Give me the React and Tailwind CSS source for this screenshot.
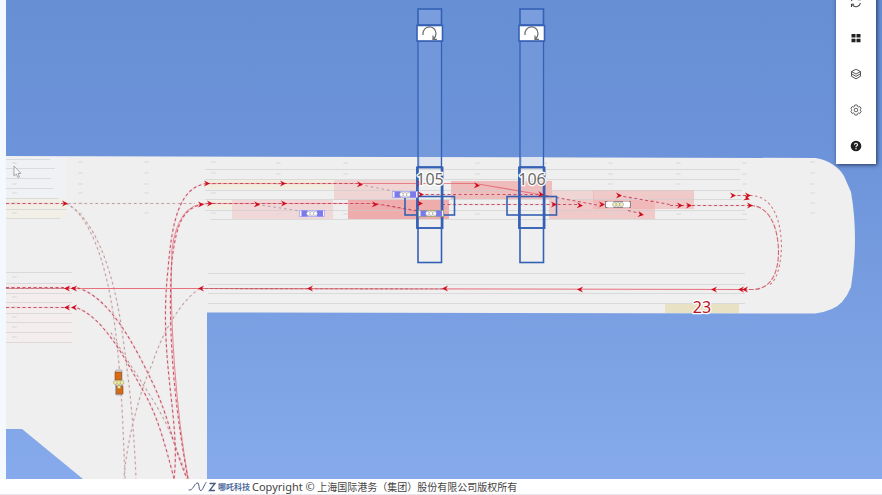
const LAND =
  'M6 156 L400 157 L815 158 Q824 159 832 164 Q840 169 844 176 L851 192 Q855 215 855 240 Q855 262 851 287 Q848 295 842 302 Q834 311 815 313.5 L207 312.5 L207 479 L83 479 L22 429 L6 429 Z';

// [x1, x2, y]
const LANES = [
  [6, 50, 159], [6, 55, 168], [6, 51, 178], [6, 53, 188], [6, 58, 198], [6, 66, 209], [6, 60, 218],
  [6, 72, 272], [6, 72, 283], [6, 72, 293], [6, 72, 302], [6, 72, 313], [6, 72, 322], [6, 72, 332], [6, 72, 342],
  [205, 740, 169], [205, 740, 179], [205, 742, 190], [205, 742, 199], [205, 745, 210], [210, 747, 219],
  [208, 745, 273], [208, 745, 284], [208, 745, 293], [208, 745, 303],
];

// [x, y, width, height, color, opacity]
const ZONES = [
  [6, 157, 60, 41, '#f2f3fc', 0.5],
  [6, 199, 60, 19, '#f4efcf', 0.3],
  [6, 284, 66, 60, '#ffe9e9', 0.3],
  [207, 180, 127, 9, '#f6eecb', 0.45],
  [207, 200, 27, 9, '#f6eecb', 0.3],
  [334, 180, 83, 20, '#f2bcbc', 0.5],
  [232, 200, 101, 19, '#f2bcbc', 0.45],
  [348, 200, 101, 19, '#ec7f7f', 0.6],
  [451, 181, 101, 18, '#ee9a9a', 0.6],
  [549, 200, 106, 19, '#f0a9a9', 0.55],
  [549, 190, 45, 10, '#f2bcbc', 0.5],
  [593, 190, 101, 19, '#f0a9a9', 0.55],
  [665, 304, 74, 9, '#e6dcb4', 0.75],
];

const SMUDGES = [
  ...[162, 173, 184, 193, 203, 213].flatMap((y) => [[78, y], [144, y], [211, y], [810, y]]),
  ...[163, 174, 184, 214].flatMap((y) => [[276, y], [343, y], [475, y], [542, y], [608, y], [676, y], [742, y]]),
  ...[163, 173, 184, 193, 203, 213, 277, 297, 307, 317, 327, 337].map((y) => [12, y]),
];

const FAINT = [
  'M68 204 H195',
  'M66 204 C88 214 106 260 114 320 S123 430 125 479',
  'M66 204 C92 216 112 265 121 325 S134 430 136 479',
  'M200 289 C182 300 163 331 152 365 C140 390 126 445 124 479',
  'M111 333 C132 372 160 405 172 438 L188 479',
  'M257 205 L310 213',
  'M360 185 L400 193',
];

const DASHED = [
  'M6 204 H65',
  'M6 288 H76 C109 296 134 345 152 382 S172 445 187 479',
  'M6 308 H76 C105 318 128 365 143 391 S165 445 174 479',
  'M174 479 C181 420 158 360 168 270 C172 220 180 187 207 184',
  'M188 479 C171 390 168 310 172 260 C177 222 183 207 207 204',
  'M207 184 H360',
  'M207 204 H376',
  'M376 204 L422 212',
  'M420 195 H540',
  'M442 205 H580',
  'M540 195 L600 206 H608',
  'M618 196 L670 205',
  'M628 211 L641 214',
  'M670 206 H750',
  'M732 196 H750',
];

const SOLID = [
  'M188 479 C176 410 169 320 172 250 C176 219 187 204 207 204',
  'M207 184 H475 L540 195',
  'M207 204 H374 L418 212',
];

// [x, y, rotation]
const ARROWS = [
  [65, 204, 0], [207, 184, 0], [283, 184, 0], [360, 185, 5], [420, 184, 0], [477, 186, 5], [541, 195, 8],
  [201, 205, 0], [210, 204, 0], [257, 205, 5], [284, 204, 0], [375, 205, 5], [421, 195, 0], [420, 204, 0],
  [554, 205, 0], [580, 206, 5], [602, 205, 0], [619, 196, 0], [641, 215, 10], [680, 206, 0], [689, 206, 0],
  [733, 196, 0], [748, 196, 0], [747, 199, 20], [750, 206, 0],
  [741, 290, 180], [745, 290, 180], [714, 290, 180], [580, 290, 180], [445, 289, 180], [310, 289, 180],
  [201, 289, 180], [74, 289, 180], [67, 289, 180], [74, 308, 180], [67, 308, 180],
];

const CRANES = [
  { id: '105', x: 418 },
  { id: '106', x: 520 },
];

function Crane({ x }) {
  return (
    <g fill="none" stroke="#3561b5" strokeWidth="1.6">
      <rect x={x} y="9" width="23.5" height="16" fill="#799ddd" />
      <rect x={x} y="41" width="23.5" height="126" fill="#789cdd" fillOpacity="0.65" strokeWidth="1.3" />
      <path d={`M${x + 1.5} 157 h21 v10 h-21 z`} fill="#dfe5f0" stroke="none" />
      <rect x={x - 1} y="25.5" width="25.5" height="15.5" fill="#fff" />
      <path
        d={`M${x + 5} 35 C${x + 4} 24.5 ${x + 18} 24.5 ${x + 18} 33.5 Q${x + 18} 37 ${x + 15.5} 39 M${x + 15} 35.5 V39.3 H${x + 19}`}
        stroke="#666b70"
        strokeWidth="1.2"
      />
      <rect x={x} y="167" width="23.5" height="95.5" />
      <rect x={x - 1} y="167.5" width="25.5" height="60.5" strokeWidth="1.9" />
      <rect x={x - 13} y="196.5" width="49.5" height="18.5" />
    </g>
  );
}

function Truck({ x, y, color = '#7b79ee', label = '#fff', tips = '#a7aaf3' }) {
  return (
    <g>
      <rect x={x - 12.5} y={y - 3} width="25" height="6" fill="#f4f4ff" stroke={tips} strokeWidth="0.8" />
      <rect x={x - 10.5} y={y - 3} width="6" height="6" fill={color} />
      <rect x={x + 5} y={y - 3} width="6" height="6" fill={color} />
      <g fill={label} stroke="#888" strokeWidth="0.5">
        <circle cx={x - 3.5} cy={y} r="2" />
        <circle cx={x} cy={y} r="2" />
        <circle cx={x + 3.5} cy={y} r="2" />
      </g>
    </g>
  );
}

function YardMap() {
  return (
    <svg
      viewBox="6 0 876 479"
      preserveAspectRatio="xMinYMin slice"
      className="block h-full w-full"
      role="img"
      aria-label="Terminal map"
    >
      <defs>
        <linearGradient id="water" x1="0" y1="0" x2="0" y2="1">
          <stop offset="0" stopColor="#668fd4" />
          <stop offset="0.33" stopColor="#6d94da" />
          <stop offset="0.66" stopColor="#7a9fe2" />
          <stop offset="1" stopColor="#86aaeb" />
        </linearGradient>
      </defs>
      <rect x="6" y="0" width="876" height="479" fill="url(#water)" />
      <path d={LAND} fill="#efefef" />
      {ZONES.map(([x, y, w, h, fill, opacity]) => (
        <rect key={`${x}-${y}`} x={x} y={y} width={w} height={h} fill={fill} fillOpacity={opacity} />
      ))}
      <g stroke="#c9cccd" strokeWidth="0.8" strokeOpacity="0.75">
        {LANES.map(([x1, x2, y]) => (
          <line key={`${x1}-${y}`} x1={x1} x2={x2} y1={y + 0.5} y2={y + 0.5} />
        ))}
      </g>
      <g fill="#d5d7d8" fillOpacity="0.5">
        {SMUDGES.map(([x, y]) => (
          <rect key={`${x}-${y}`} x={x} y={y - 1} width="5" height="2" rx="1" />
        ))}
      </g>

      <g fill="none" strokeWidth="1.1" transform="translate(0 -0.5)">
        {FAINT.map((d) => (
          <g key={d}>
            <path d={d} stroke="#f7d9dc" strokeWidth="2" strokeOpacity="0.35" />
            <path d={d} stroke="#b5a3a3" strokeDasharray="2.5 3" />
          </g>
        ))}
        {SOLID.map((d) => (
          <path key={d} d={d} stroke="#e0505f" strokeOpacity="0.65" />
        ))}
        <path d="M6 289 H200 L745 290" stroke="#e8707c" />
        <path d="M200 289 L445 289.5 M6 289 H76" stroke="#8a5560" strokeOpacity="0.5" strokeDasharray="3 2" />
        {DASHED.map((d) => (
          <g key={d}>
            <path d={d} stroke="#f6c9cf" strokeWidth="2" strokeOpacity="0.4" />
            <path d={d} stroke="#bd3f55" strokeOpacity="0.85" strokeDasharray="3 2.5" />
          </g>
        ))}
        <path d="M750 206 C768 206 778 225 778.5 252 C778.5 275 770 289 754 290 H742" stroke="#d46570" strokeDasharray="5 1.5" />
        <path d="M750 196 C771 196 781 217 781.5 247 C781 268 776 281 770 285" stroke="#d27b83" strokeDasharray="2.5 2.5" />
      </g>

      {CRANES.map((crane) => (
        <Crane key={crane.id} x={crane.x} />
      ))}
      <Truck x={312} y={213.5} />
      <Truck x={405} y={194.5} />
      <Truck x={431} y={213.5} tips="#91a65a" />
      <Truck x={618} y={204.5} color="#fff" label="#f1efb5" tips="#77706e" />
      <g>
        <rect x="115.5" y="370" width="6.5" height="25" rx="1" fill="#e7e3e3" stroke="#8b8584" strokeWidth="0.6" />
        <rect x="115" y="372" width="6.5" height="8" fill="#d96a10" stroke="#7d4b28" strokeWidth="0.6" />
        <rect x="116.5" y="386" width="6.5" height="8" fill="#d96a10" stroke="#7d4b28" strokeWidth="0.6" />
        <g fill="#f1edaf" stroke="#a39d62" strokeWidth="0.6">
          <circle cx="115.5" cy="382.5" r="2" />
          <circle cx="118.8" cy="382.5" r="2" />
          <circle cx="122" cy="382.5" r="2" />
          <circle cx="119" cy="387" r="1.6" />
        </g>
      </g>

      <g fill="#cf0d1c">
        {ARROWS.map(([x, y, r]) => (
          <path
            key={`${x}-${y}`}
            d="M3 0 L-3 -3 L-1 0 L-3 3 Z"
            transform={`translate(${x} ${y - 0.5}) rotate(${r})`}
          />
        ))}
      </g>

      <g
        fontFamily="'Noto Sans', 'Open Sans', sans-serif"
        fontSize="16"
        textAnchor="middle"
        stroke="#fff"
        strokeWidth="2.5"
        strokeLinejoin="round"
        paintOrder="stroke"
      >
        {CRANES.map(({ id, x }) => (
          <text key={id} x={x + 12} y="185" fill="#6b6b6b">
            {id}
          </text>
        ))}
        <text x="702" y="313" fill="#b8141f">
          23
        </text>
      </g>
      <path d="M14 166 v10 l2.3 -2 1.6 3.6 1.6 -.7 -1.6 -3.5 h3 z" fill="#f8f8f8" stroke="#92969b" strokeWidth="0.8" />
    </svg>
  );
}

function RefreshIcon() {
  return (
    <svg viewBox="0 0 12 12" className="h-3 w-3" fill="none" stroke="#444" strokeWidth="1.1">
      <path d="M1.5 5 A4.7 4.7 0 0 1 9.5 2.8 M10.5 1 V3.7 H7.8" />
      <path d="M10.5 7 A4.7 4.7 0 0 1 2.5 9.2 M1.5 11 V8.3 H4.2" />
    </svg>
  );
}

function GridIcon() {
  return (
    <svg viewBox="0 0 12 12" className="h-3 w-3" fill="#222">
      <path d="M1.5 2 H5.5 V5.5 H1.5 Z M6.5 2 H10.5 V5.5 H6.5 Z M1.5 6.7 H5.5 V10.2 H1.5 Z M6.5 6.7 H10.5 V10.2 H6.5 Z" />
    </svg>
  );
}

function LayersIcon() {
  return (
    <svg viewBox="0 0 12 12" className="h-3 w-3" fill="none" stroke="#444" strokeWidth="0.9" strokeLinejoin="round">
      <path d="M6 1.2 L10.5 3.6 L6 6 L1.5 3.6 Z" />
      <path d="M1.5 3.6 V8.3 L6 10.8 L10.5 8.3 V3.6 M1.5 5.9 L6 8.3 L10.5 5.9" />
    </svg>
  );
}

function GearIcon() {
  return (
    <svg viewBox="0 0 12 12" className="h-3 w-3" fill="none" stroke="#555" strokeWidth="0.9" strokeLinejoin="round">
      <path d="M4.8 1 H7.2 L7.6 2.5 L8.5 3 L10 2.6 L11.2 4.7 L10.1 5.7 V6.3 L11.2 7.3 L10 9.4 L8.5 9 L7.6 9.5 L7.2 11 H4.8 L4.4 9.5 L3.5 9 L2 9.4 L0.8 7.3 L1.9 6.3 V5.7 L0.8 4.7 L2 2.6 L3.5 3 L4.4 2.5 Z" />
      <circle cx="6" cy="6" r="1.8" />
    </svg>
  );
}

function HelpIcon() {
  return (
    <svg viewBox="0 0 12 12" className="h-3 w-3" fill="none">
      <circle cx="6" cy="6" r="5.3" fill="#222" />
      <path d="M4.5 4.7 A1.5 1.5 0 1 1 6.5 6.1 Q6 6.3 6 7.2" stroke="#fff" strokeWidth="1.1" />
      <circle cx="6" cy="8.8" r="0.7" fill="#fff" />
    </svg>
  );
}

const TOOLS = [
  { label: 'Refresh', icon: <RefreshIcon /> },
  { label: 'Panels', icon: <GridIcon /> },
  { label: 'Layers', icon: <LayersIcon /> },
  { label: 'Settings', icon: <GearIcon /> },
  { label: 'Help', icon: <HelpIcon /> },
];

export default function App() {
  return (
    <div className="flex h-screen flex-col overflow-hidden bg-white font-['Noto_Sans','Noto_Sans_CJK_SC',sans-serif]">
      <div className="relative flex min-h-0 flex-1">
        <div className="w-1.5 shrink-0 bg-[#f4f8ff]" />
        <main className="min-w-0 flex-1">
          <YardMap />
        </main>
        <nav
          aria-label="Map tools"
          className="absolute -top-4 right-[6px] flex flex-col bg-white shadow-[1px_1px_4px_rgba(20,30,60,0.8)]"
        >
          {TOOLS.map(({ label, icon }) => (
            <button key={label} type="button" aria-label={label} className="flex h-9 w-10 items-center justify-center">
              {icon}
            </button>
          ))}
        </nav>
      </div>
      <footer className="flex h-4 shrink-0 items-center border-b border-gray-200 bg-white pl-[188px] leading-4 text-[#444]">
        <svg viewBox="0 0 28 12" className="h-3 w-7 shrink-0" fill="none" stroke="#46597f" strokeLinecap="round" aria-hidden>
          <path d="M1 9 C5 10 6 3 9 2 C12 1 10 10 13 9.5 C15 9 16 4 18 1.5" strokeWidth="1" />
          <path d="M22 2.5 H27 L21.5 9.5 H26.5" strokeWidth="1.3" />
        </svg>
        <span className="mx-0.5 text-[8px] font-bold whitespace-nowrap text-[#4c6a9d]">哪吒科技</span>
        <p className="text-[10px] whitespace-nowrap">
          <span className="text-[11px]">Copyright ©</span> 上海国际港务（集团）股份有限公司版权所有
        </p>
      </footer>
    </div>
  );
}
